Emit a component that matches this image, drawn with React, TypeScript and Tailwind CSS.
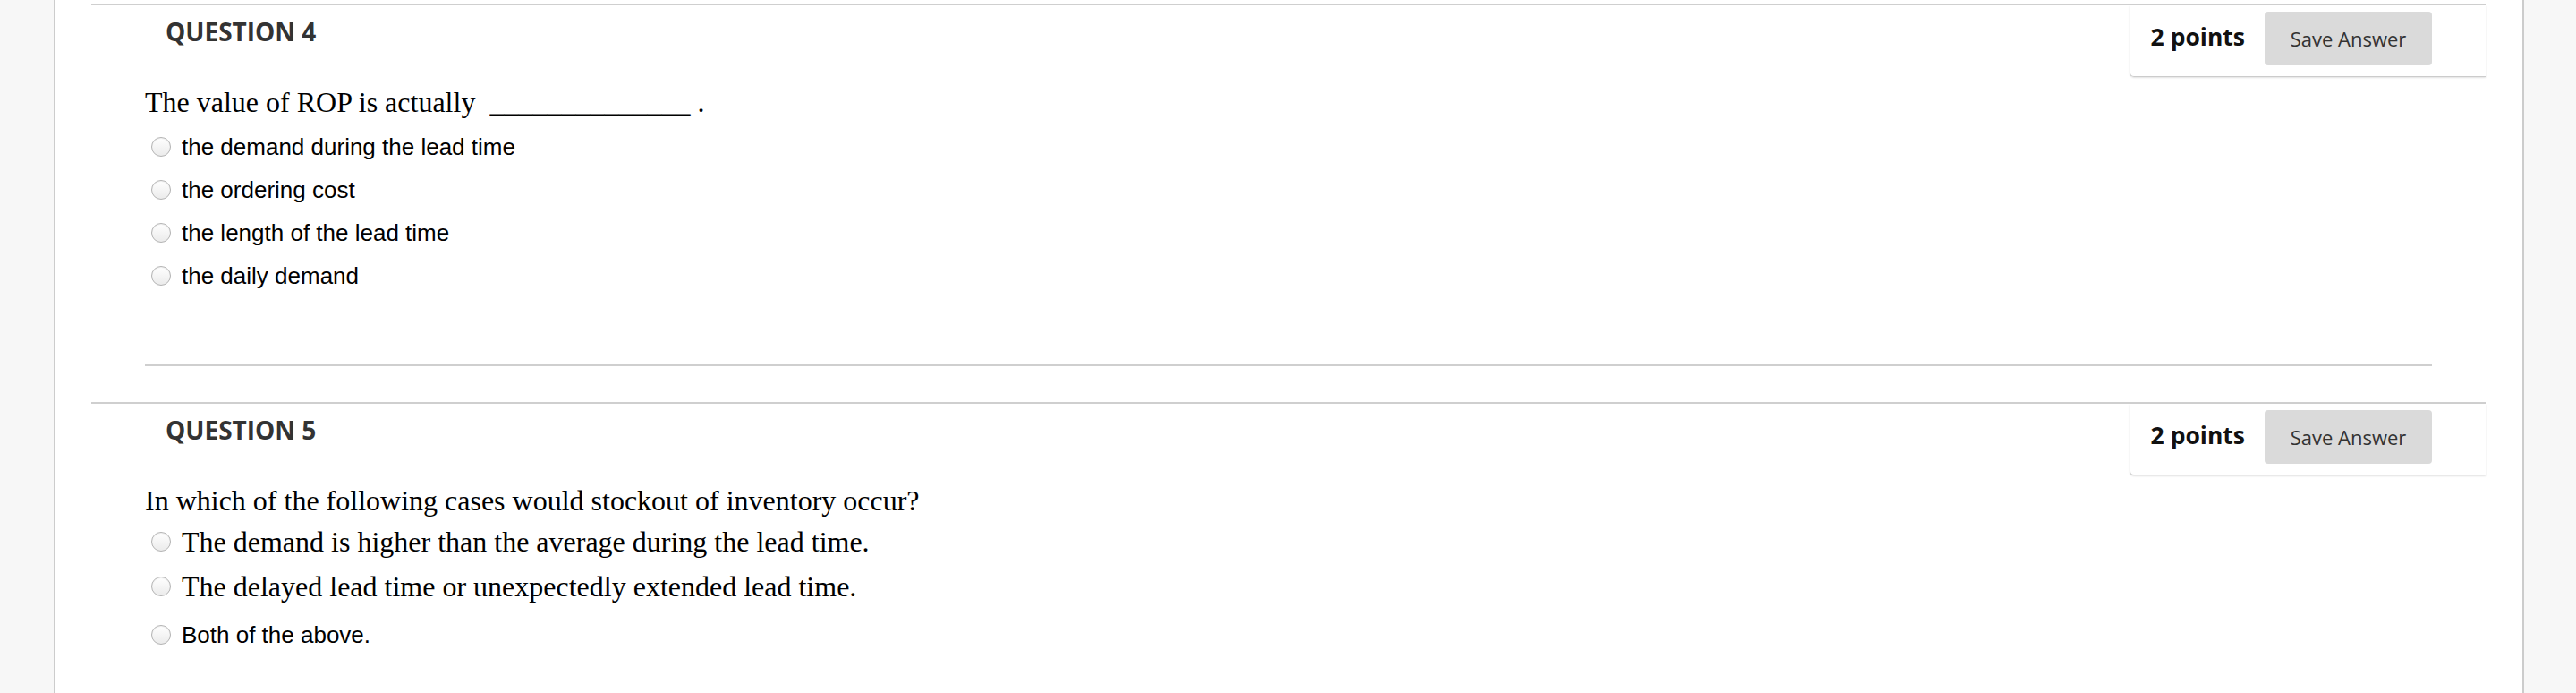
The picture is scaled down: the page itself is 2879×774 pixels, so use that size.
import React from "react";

type Option = { label: string; serif: boolean; h: string };

type Question = {
  num: number;
  prompt: React.ReactNode;
  listGap: string;
  options: Option[];
};

const questions: Question[] = [
  {
    num: 4,
    prompt: (
      <>
        The value of ROP is actually{"\u00a0\u00a0"}______________{"\u00a0"}.
      </>
    ),
    listGap: "mt-[8px]",
    options: [
      { label: "the demand during the lead time", serif: false, h: "h-[48px]" },
      { label: "the ordering cost", serif: false, h: "h-[48px]" },
      { label: "the length of the lead time", serif: false, h: "h-[48px]" },
      { label: "the daily demand", serif: false, h: "h-[48px]" },
    ],
  },
  {
    num: 5,
    prompt: <>In which of the following cases would stockout of inventory occur?</>,
    listGap: "mt-[3px]",
    options: [
      { label: "The demand is higher than the average during the lead time.", serif: true, h: "h-[50px]" },
      { label: "The delayed lead time or unexpectedly extended lead time.", serif: true, h: "h-[50px]" },
      { label: "Both of the above.", serif: false, h: "h-[58px]" },
    ],
  },
];

function Radio() {
  return (
    <span className="ml-[7px] h-[22px] w-[22px] shrink-0 rounded-full border border-[#b3b3b3] bg-linear-to-b from-white to-[#ebebeb] shadow-[inset_0_1px_1px_rgba(0,0,0,0.06)]" />
  );
}

function QuestionBlock({ q, first }: { q: Question; first: boolean }) {
  return (
    <section className={`border-t-2 border-[#cfcfcf] ${first ? "" : "mt-[40px]"}`}>
      <div className="flex items-start justify-between">
        <h3 className="ml-[83px] mt-[15px] font-['Open_Sans',sans-serif] text-[28px] leading-[28px] font-bold text-[#333333]">
          QUESTION {q.num}
        </h3>
        <div className="flex h-[80px] items-start gap-[22px] rounded-bl-[5px] border-b border-l border-[#cccccc] pl-[23px] pr-[60px] shadow-[0_1px_2px_rgba(0,0,0,0.12)]">
          <span className="mt-[21.5px] font-['Open_Sans',sans-serif] text-[26.5px] leading-[26.5px] font-bold text-[#111111]">
            2 points
          </span>
          <button className="mt-[7px] flex h-[60px] w-[187px] items-center justify-center rounded-[4px] bg-[#dadada] font-['Open_Sans',sans-serif] text-[22px] text-[#333333]">
            Save Answer
          </button>
        </div>
      </div>

      <div className="pl-[60px] pr-[60px]">
        <div className="border-b-2 border-[#cfcfcf] pb-[75px]">
          <p className="mt-[10px] font-['Liberation_Serif','Times_New_Roman',serif] text-[32px] leading-[36px] text-black">
            {q.prompt}
          </p>
          <ul className={q.listGap}>
            {q.options.map((o) => (
              <li key={o.label} className={`flex items-center ${o.h}`}>
                <Radio />
                <span
                  className={
                    o.serif
                      ? "ml-[12px] font-['Liberation_Serif','Times_New_Roman',serif] text-[32px] leading-[36px] text-black"
                      : "ml-[12px] font-['Liberation_Sans',Arial,sans-serif] text-[26px] leading-[28px] text-black"
                  }
                >
                  {o.label}
                </span>
              </li>
            ))}
          </ul>
        </div>
      </div>
    </section>
  );
}

export default function App() {
  return (
    <div className="flex h-[774px] w-full overflow-hidden bg-white">
      <aside className="w-[62px] shrink-0 border-r-2 border-[#cccccc] bg-[#f7f7f7]" />
      <main className="min-w-0 flex-1 pl-[40px] pr-[41px] pt-[4px]">
        {questions.map((q, i) => (
          <QuestionBlock key={q.num} q={q} first={i === 0} />
        ))}
      </main>
      <aside className="w-[60px] shrink-0 border-l-2 border-[#cccccc] bg-[#f7f7f7]" />
    </div>
  );
}
